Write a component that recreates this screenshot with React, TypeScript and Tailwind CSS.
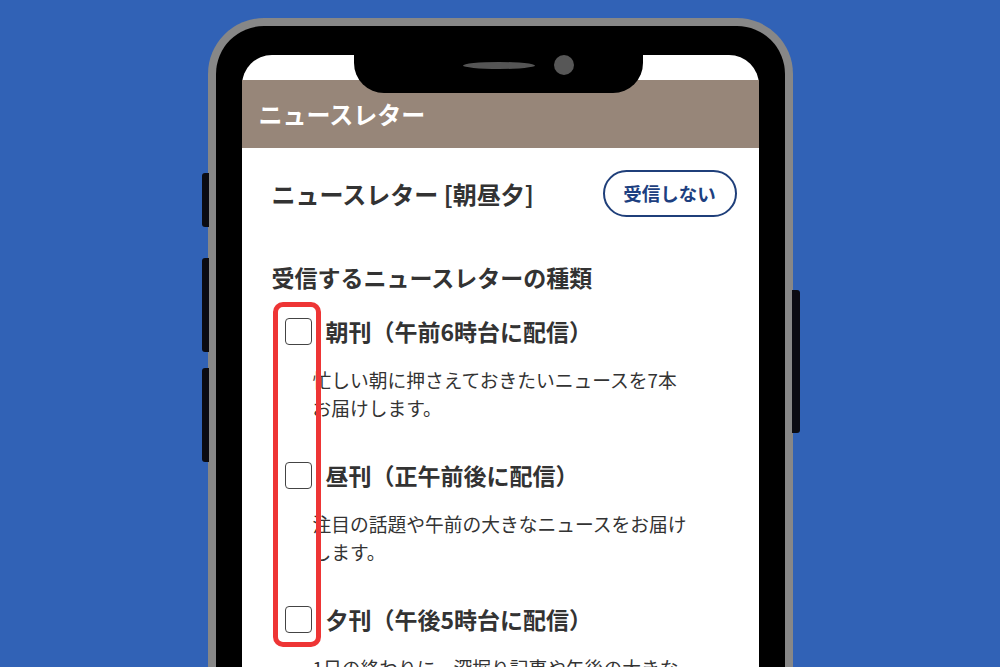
const jp = { fontFamily: '"Noto Sans CJK JP", "Noto Sans", sans-serif' };

const editions = [
  {
    label: '朝刊（午前6時台に配信）',
    desc: '忙しい朝に押さえておきたいニュースを7本お届けします。',
  },
  {
    label: '昼刊（正午前後に配信）',
    desc: '注目の話題や午前の大きなニュースをお届けします。',
  },
  {
    label: '夕刊（午後5時台に配信）',
    desc: '1日の終わりに、深掘り記事や午後の大きなニュースをお届けします。',
  },
];

function Checkbox() {
  return <span className="block w-[27px] h-[27px] shrink-0 rounded-[4px] border-[1.5px] border-[#444] bg-white" />;
}

export default function App() {
  return (
    <div className="w-[1000px] h-[667px] overflow-hidden bg-[#3162b6]" style={jp}>
      <div className="relative mx-auto mt-[18px] w-[585px] h-[900px] rounded-[56px] bg-[#878787] p-2">
        {/* side keys */}
        <span className="absolute -left-[6px] top-[155px] w-[7px] h-[54px] rounded-l-[3px] bg-[#0b0b12]" />
        <span className="absolute -left-[6px] top-[240px] w-[7px] h-[94px] rounded-l-[3px] bg-[#0b0b12]" />
        <span className="absolute -left-[6px] top-[350px] w-[7px] h-[94px] rounded-l-[3px] bg-[#0b0b12]" />
        <span className="absolute -right-[7px] top-[272px] w-[8px] h-[143px] rounded-r-[3px] bg-[#0b0b12]" />

        <div className="h-full rounded-[48px] bg-black px-[26px] pt-[29px]">
          <div className="relative h-full rounded-t-[30px] bg-white">
            {/* notch */}
            <div className="absolute top-0 left-[112px] w-[289px] h-[38px] rounded-b-[30px] bg-black z-10">
              <span className="absolute top-[7px] left-[109px] w-[72px] h-[7px] rounded-[50%] bg-[#555]" />
              <span className="absolute top-0 left-[200px] w-[20px] h-[20px] rounded-full bg-[#575757]" />
            </div>

            <div className="pt-[25px]">
              <div className="h-[68px] bg-[#978679] flex items-center pl-[17px]">
                <span className="text-white text-[24px] font-bold leading-none">ニュースレター</span>
              </div>

              <div className="pl-[30px] pr-[22px]">
                <div className="mt-[22px] flex items-center justify-between">
                  <h1 className="text-[24px] font-bold text-[#333] leading-[32px]">ニュースレター [朝昼夕]</h1>
                  <button className="w-[134px] h-[47px] rounded-full border-2 border-[#1f3f7a] text-[18.5px] font-bold text-[#1d3f80]">
                    受信しない
                  </button>
                </div>

                <h2 className="mt-[44px] text-[23px] font-bold text-[#333] leading-[32px]">受信するニュースレターの種類</h2>

                <div className="relative mt-[22px]">
                  <div className="absolute -top-[13px] left-[1px] w-[48px] h-[345px] rounded-[10px] border-[5px] border-[#ee3535] z-10" />
                  {editions.map((e, i) => (
                    <div key={e.label} className={i > 0 ? 'mt-[37px]' : ''}>
                      <label className="flex items-center">
                        <span className="ml-[13px]">
                          <Checkbox />
                        </span>
                        <span className="ml-[14px] text-[23px] font-bold text-[#333] leading-[32px]">{e.label}</span>
                      </label>
                      <p className="mt-[19px] ml-[41px] w-[380px] text-[18.75px] leading-[28px] text-[#333]">{e.desc}</p>
                    </div>
                  ))}
                </div>
              </div>
            </div>
          </div>
        </div>
      </div>
    </div>
  );
}
